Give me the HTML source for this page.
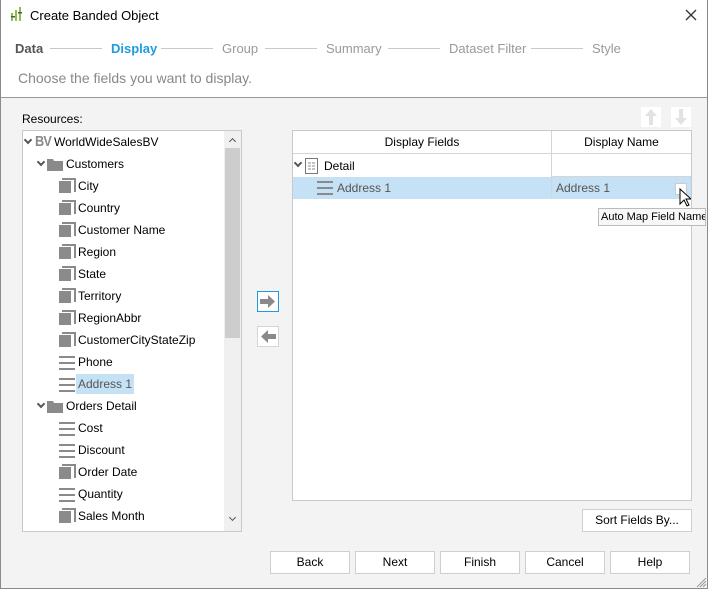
<!DOCTYPE html>
<html><head><style>
*{margin:0;padding:0;box-sizing:border-box}
body{width:708px;height:589px;overflow:hidden;background:#f3f3f3;font-family:"Liberation Sans",sans-serif;font-size:12px;color:#000;position:relative}
.a{position:absolute;white-space:nowrap}
.top{position:absolute;left:0;top:0;width:708px;height:98px;background:#fff;border-bottom:1px solid #9a9a9a}
.step{position:absolute;top:41px;font-size:13px;color:#999}
.ln{position:absolute;top:48px;height:1px;background:#c8c8c8}
.box{position:absolute;background:#fff;border:1px solid #c9c9c9}
.row{position:absolute;height:22px;line-height:22px;margin-top:1px}
.dim{position:absolute;width:15px;height:15px;margin-top:1px}
.dim:before{content:"";position:absolute;left:0;top:3px;width:12px;height:12px;background:#8a8a8a}
.dim:after{content:"";position:absolute;left:3px;top:0;width:12px;height:12px;border-top:2px solid #8a8a8a;border-right:2px solid #8a8a8a}
.mea{position:absolute;width:16px;height:14px;border-top:2px solid #8a8a8a;border-bottom:2px solid #8a8a8a;margin-top:1px}
.mea:after{content:"";position:absolute;left:0;top:4px;width:16px;height:2px;background:#8a8a8a}
.chev{position:absolute;width:7px;height:7px;border-right:2px solid #555;border-bottom:2px solid #555;transform:rotate(45deg)}
.btn{position:absolute;height:23px;background:#fff;border:1px solid #cfcfcf;text-align:center;line-height:21px;font-size:12px}
</style></head><body>
<div class="top"></div>
<div class="a" style="left:0;top:0;width:708px;height:589px;border:1px solid #8a8a8a;border-top:none"></div>
<svg class="a" style="left:11px;top:7px" width="12" height="16"><rect x="0" y="6" width="2" height="8" fill="#8bc34a"/><rect x="4" y="3" width="2" height="11" fill="#8bc34a"/><rect x="8" y="0" width="2" height="14" fill="#8bc34a"/><rect x="0" y="9" width="4" height="1.5" fill="#555"/><rect x="7" y="5" width="4" height="1.5" fill="#555"/></svg>
<div class="a" style="left:30px;top:8px;font-size:13px">Create Banded Object</div>
<svg class="a" style="left:685px;top:9px" width="12" height="12"><path d="M1 1L11 11M11 1L1 11" stroke="#333" stroke-width="1.3"/></svg>
<div class="step" style="left:15px;color:#555;font-weight:bold">Data</div>
<div class="ln" style="left:50px;width:52px"></div>
<div class="step" style="left:111px;color:#1e9be0;font-weight:bold">Display</div>
<div class="ln" style="left:161px;width:52px"></div>
<div class="step" style="left:222px">Group</div>
<div class="ln" style="left:265px;width:52px"></div>
<div class="step" style="left:326px">Summary</div>
<div class="ln" style="left:388px;width:52px"></div>
<div class="step" style="left:449px">Dataset Filter</div>
<div class="ln" style="left:531px;width:52px"></div>
<div class="step" style="left:592px">Style</div>
<div class="a" style="left:18px;top:70px;font-size:14px;color:#888">Choose the fields you want to display.</div>

<div class="a" style="left:22px;top:112px">Resources:</div>
<div class="box" style="left:22px;top:130px;width:220px;height:402px"></div>
<div class="a" style="left:224px;top:131px;width:17px;height:400px;background:#f0f0f0"></div>
<div class="a" style="left:225px;top:148px;width:15px;height:190px;background:#cdcdcd"></div>
<div class="chev" style="left:230px;top:139px;transform:rotate(225deg);width:5px;height:5px;border-width:1.5px"></div>
<div class="chev" style="left:230px;top:515px;width:5px;height:5px;border-width:1.5px"></div>

<div class="chev" style="left:25px;top:137px;width:6px;height:6px"></div>
<div class="a" style="left:35px;top:133px;font-size:15px;font-weight:bold;color:#8a8a8a;letter-spacing:-1px;transform:scaleX(0.85);transform-origin:left">BV</div>
<div class="row" style="left:54px;top:130px">WorldWideSalesBV</div>
<div class="chev" style="left:38px;top:159px;width:6px;height:6px"></div>
<svg class="a" style="left:47px;top:158px" width="16" height="13"><path d="M0 1h6l1 2h9v10H0z" fill="#8a8a8a"/></svg>
<div class="row" style="left:66px;top:152px">Customers</div>

<div class="dim" style="left:59px;top:177px"></div><div class="row" style="left:78px;top:174px">City</div>
<div class="dim" style="left:59px;top:199px"></div><div class="row" style="left:78px;top:196px">Country</div>
<div class="dim" style="left:59px;top:221px"></div><div class="row" style="left:78px;top:218px">Customer Name</div>
<div class="dim" style="left:59px;top:243px"></div><div class="row" style="left:78px;top:240px">Region</div>
<div class="dim" style="left:59px;top:265px"></div><div class="row" style="left:78px;top:262px">State</div>
<div class="dim" style="left:59px;top:287px"></div><div class="row" style="left:78px;top:284px">Territory</div>
<div class="dim" style="left:59px;top:309px"></div><div class="row" style="left:78px;top:306px">RegionAbbr</div>
<div class="dim" style="left:59px;top:331px"></div><div class="row" style="left:78px;top:328px">CustomerCityStateZip</div>
<div class="mea" style="left:59px;top:355px"></div><div class="row" style="left:78px;top:350px">Phone</div>
<div class="mea" style="left:59px;top:377px"></div><div class="row" style="left:78px;top:373px;height:20px;line-height:20px;background:#c5e1f5;color:#555;padding:0 2px;margin-left:-2px">Address 1</div>
<div class="chev" style="left:38px;top:401px;width:6px;height:6px"></div>
<svg class="a" style="left:47px;top:400px" width="16" height="13"><path d="M0 1h6l1 2h9v10H0z" fill="#8a8a8a"/></svg>
<div class="row" style="left:66px;top:394px">Orders Detail</div>
<div class="mea" style="left:59px;top:421px"></div><div class="row" style="left:78px;top:416px">Cost</div>
<div class="mea" style="left:59px;top:443px"></div><div class="row" style="left:78px;top:438px">Discount</div>
<div class="dim" style="left:59px;top:463px"></div><div class="row" style="left:78px;top:460px">Order Date</div>
<div class="mea" style="left:59px;top:487px"></div><div class="row" style="left:78px;top:482px">Quantity</div>
<div class="dim" style="left:59px;top:507px"></div><div class="row" style="left:78px;top:504px">Sales Month</div>

<div class="a" style="left:257px;top:291px;width:22px;height:21px;background:#fff;border:1px solid #1e9be0"></div>
<svg class="a" style="left:260px;top:295px" width="16" height="13"><path d="M0 4h8V0l7 6.5-7 6.5V9H0z" fill="#8a8a8a"/></svg>
<div class="a" style="left:257px;top:326px;width:22px;height:21px;background:#fff;border:1px solid #d5d5d5"></div>
<svg class="a" style="left:260px;top:330px" width="16" height="13"><path d="M16 4H8V0L1 6.5 8 13V9h8z" fill="#8a8a8a"/></svg>

<div class="a" style="left:641px;top:107px;width:20px;height:20px;background:#fff"></div>
<svg class="a" style="left:644px;top:109px" width="14" height="16"><path d="M7 0l6 7H9v9H5V7H1z" fill="#e2e2e2"/></svg>
<div class="a" style="left:671px;top:107px;width:20px;height:20px;background:#fff"></div>
<svg class="a" style="left:674px;top:109px" width="14" height="16"><path d="M7 16l6-7H9V0H5v9H1z" fill="#e2e2e2"/></svg>

<div class="box" style="left:292px;top:130px;width:400px;height:371px"></div>
<div class="a" style="left:293px;top:131px;width:398px;height:23px;border-bottom:1px solid #d5d5d5"></div>
<div class="a" style="left:551px;top:131px;width:1px;height:68px;background:#d5d5d5"></div>
<div class="a" style="left:293px;top:135px;width:258px;text-align:center">Display Fields</div>
<div class="a" style="left:552px;top:135px;width:139px;text-align:center">Display Name</div>
<div class="a" style="left:552px;top:176px;width:139px;height:1px;background:#d5d5d5"></div>
<div class="chev" style="left:295px;top:160px;width:6px;height:6px"></div>
<svg class="a" style="left:305px;top:158px" width="14" height="17"><rect x=".5" y=".5" width="12" height="15" fill="#fff" stroke="#777"/><path d="M3 5h3M7 5h3M3 8h3M7 8h3M3 11h3M7 11h3" stroke="#888"/></svg>
<div class="a" style="left:324px;top:159px">Detail</div>
<div class="a" style="left:293px;top:177px;width:258px;height:22px;background:#c5e1f5"></div>
<div class="a" style="left:552px;top:177px;width:139px;height:22px;background:#c5e1f5"></div>
<div class="mea" style="left:317px;top:180px"></div>
<div class="a" style="left:337px;top:181px;color:#555">Address 1</div>
<div class="a" style="left:556px;top:181px;color:#555">Address 1</div>
<div class="a" style="left:675px;top:183px;width:12px;height:12px;background:#fff;border:1px solid #ccc"></div>
<svg class="a" style="left:679px;top:188px" width="12" height="20"><path d="M1 1v15l4-4 3 6 2-1-3-6h5z" fill="#fff" stroke="#000"/></svg>
<div class="a" style="left:598px;top:208px;width:108px;height:18px;background:#f7f7f7;border:1px solid #bbb;line-height:16px;padding-left:2px;font-size:11px;overflow:hidden">Auto Map Field Name</div>

<div class="btn" style="left:582px;top:509px;width:110px">Sort Fields By...</div>
<div class="btn" style="left:270px;top:551px;width:80px">Back</div>
<div class="btn" style="left:355px;top:551px;width:80px">Next</div>
<div class="btn" style="left:440px;top:551px;width:80px">Finish</div>
<div class="btn" style="left:525px;top:551px;width:80px">Cancel</div>
<div class="btn" style="left:610px;top:551px;width:80px">Help</div>
<svg class="a" style="left:695px;top:576px" width="12" height="12"><path d="M11 2L2 11M11 5L5 11M11 8L8 11" stroke="#999"/></svg>
</body></html>
